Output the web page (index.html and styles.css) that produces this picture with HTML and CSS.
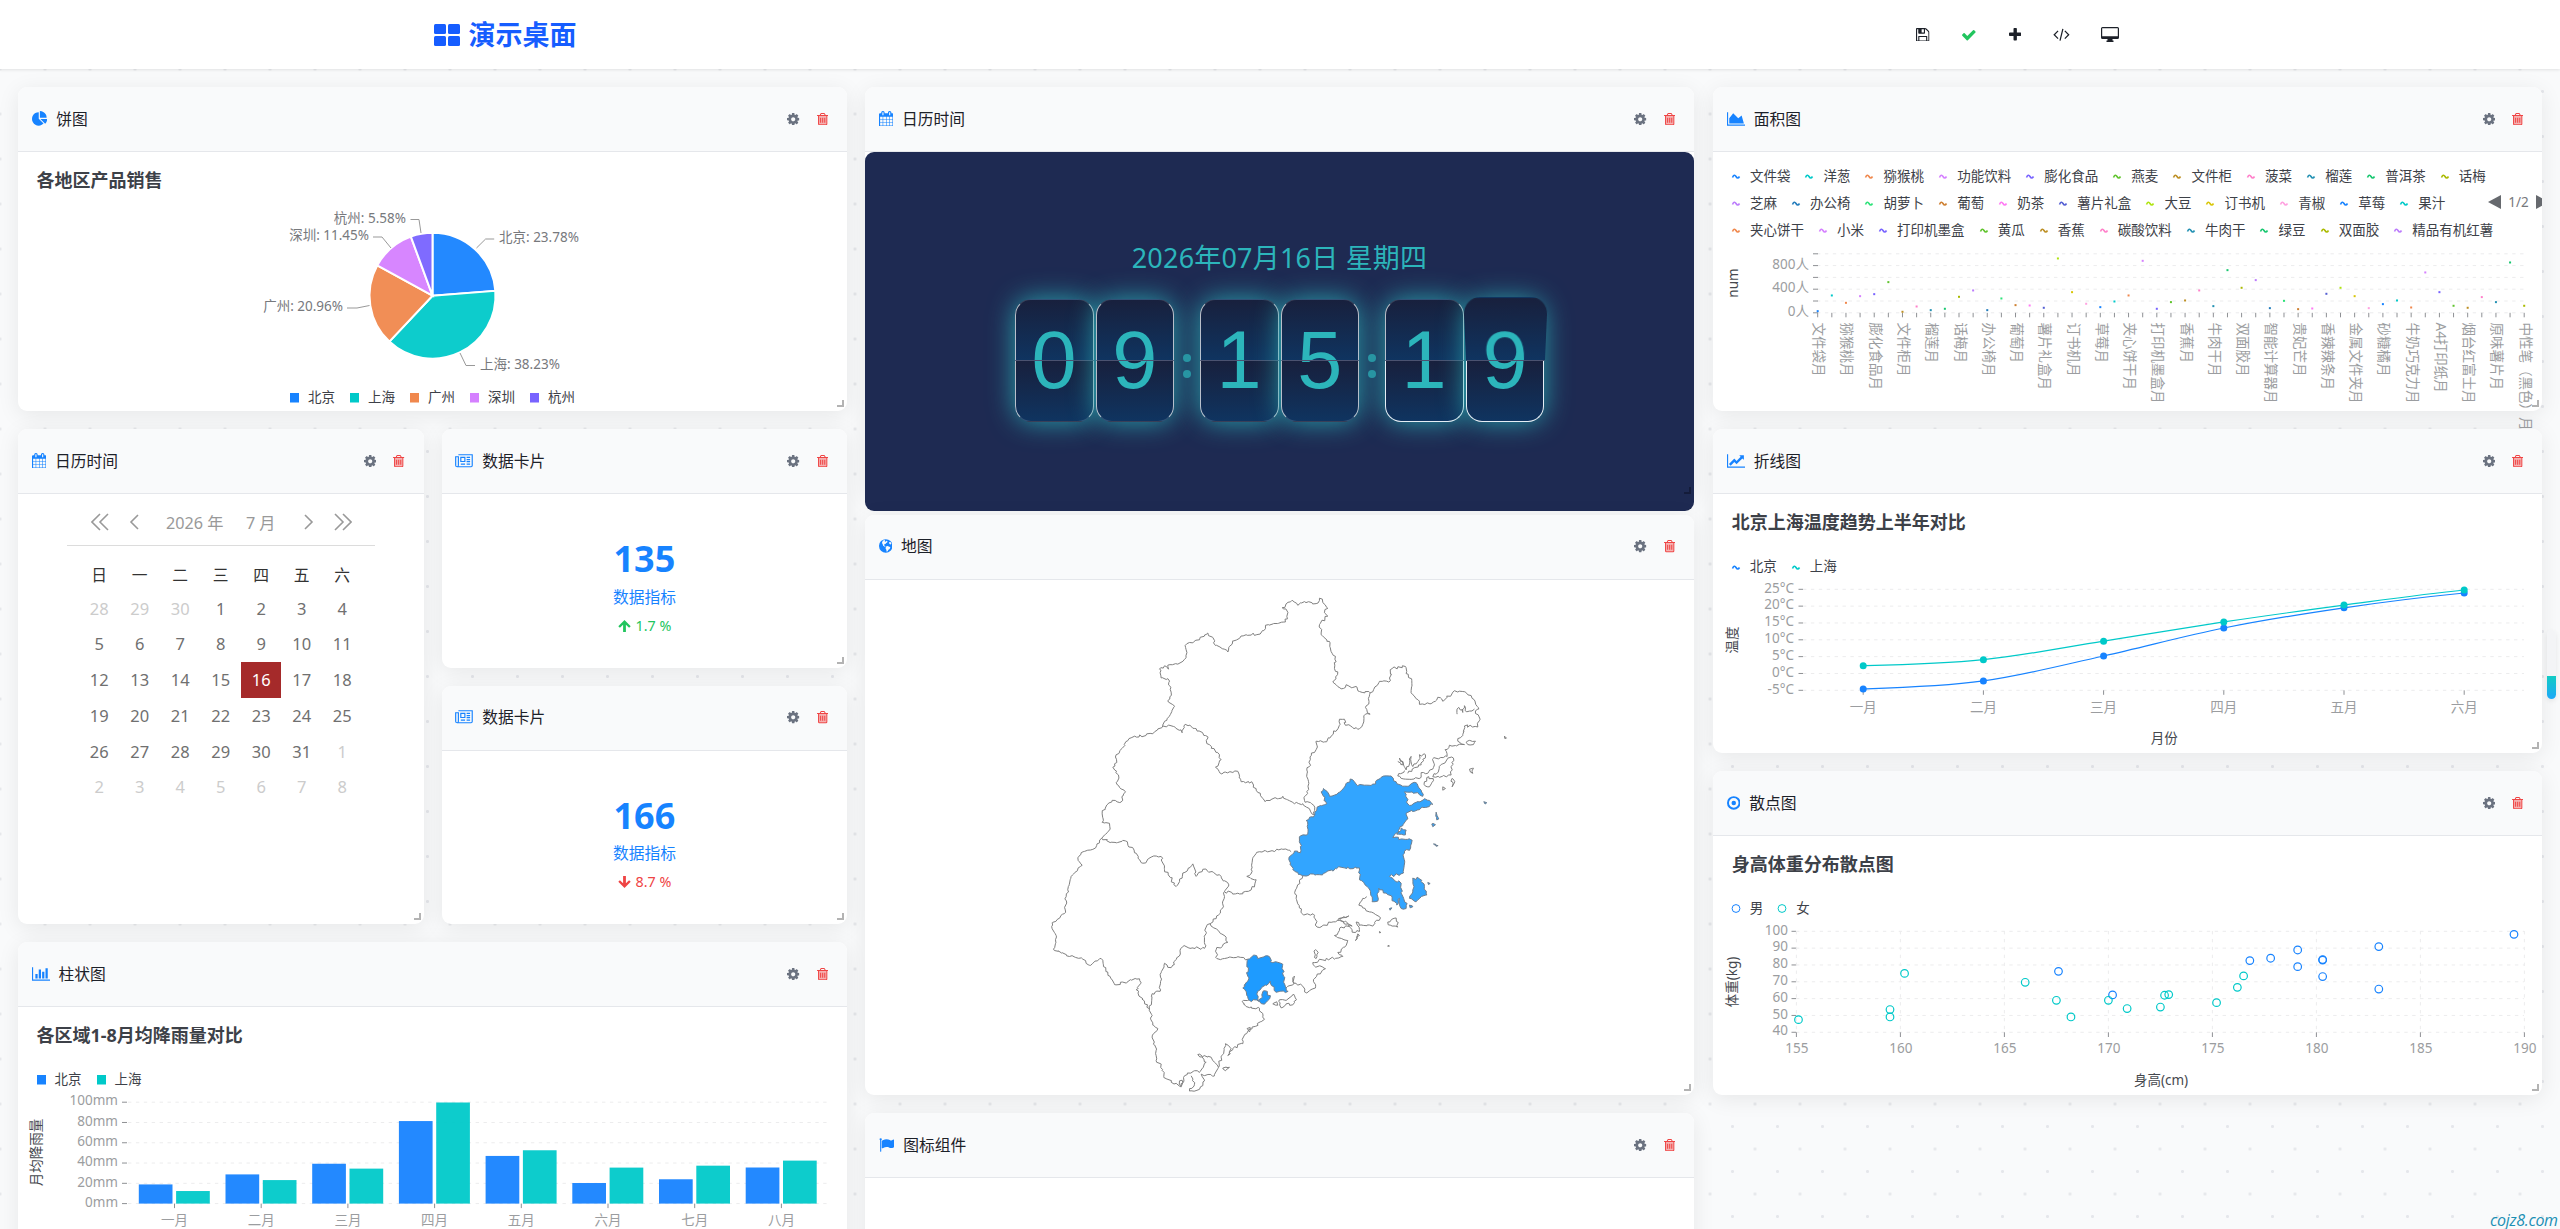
FILE: index.html
```
<!DOCTYPE html>
<html lang="zh-CN">
<head>
    <meta charset="UTF-8">
    <meta name="viewport" content="width=device-width, initial-scale=1.0">
    <title>演示桌面</title>
    <link rel="stylesheet" href="styles.css">
</head>
<body>
    <!-- Icon sprite -->
    <svg class="sprite" width="0" height="0">
        <symbol id="i-cog" viewBox="128 128 1536 1536"><path d="M1152 896q0-106-75-181t-181-75-181 75-75 181 75 181 181 75 181-75 75-181zm512-109v222q0 12-8 23t-20 13l-185 28q-19 54-39 91 35 50 107 138 10 12 10 25t-9 23q-27 37-99 108t-94 71q-12 0-26-9l-138-108q-44 23-91 38-16 136-29 186-7 28-36 28h-222q-14 0-24.500-8.500t-11.500-21.500l-28-184q-49-16-90-37l-141 107q-10 9-25 9-14 0-25-11-126-114-165-168-7-10-7-23 0-12 8-23 15-21 51-66.500t54-70.500q-27-50-41-99l-183-27q-13-2-21-12.500t-8-23.500v-222q0-12 8-23t19-13l186-28q14-46 39-92-40-57-107-138-10-12-10-24 0-10 9-23 26-36 98.500-107.500t94.500-71.500q13 0 26 10l138 107q44-23 91-38 16-136 29-186 7-28 36-28h222q14 0 24.500 8.500t11.500 21.500l28 184q49 16 90 37l142-107q9-9 24-9 13 0 25 10 129 119 165 170 7 8 7 22 0 12-8 23-15 21-51 66.500t-54 70.500q26 50 41 98l183 28q13 2 21 12.500t8 23.500z"/></symbol>
        <symbol id="i-trash" viewBox="192 128 1408 1536"><path fill-opacity=".4" d="M400 500h992v1060h-992z"/><path d="M704 736v576q0 14-9 23t-23 9h-64q-14 0-23-9t-9-23v-576q0-14 9-23t23-9h64q14 0 23 9t9 23zm256 0v576q0 14-9 23t-23 9h-64q-14 0-23-9t-9-23v-576q0-14 9-23t23-9h64q14 0 23 9t9 23zm256 0v576q0 14-9 23t-23 9h-64q-14 0-23-9t-9-23v-576q0-14 9-23t23-9h64q14 0 23 9t9 23zm128 724v-948h-896v948q0 22 7 40.500t14.500 27 10.500 8.500h832q3 0 10.500-8.500t14.500-27 7-40.500zm-672-1076h448l-48-117q-7-9-17-11h-317q-10 2-17 11zm928 32v64q0 14-9 23t-23 9h-96v948q0 83-47 143.500t-113 60.500h-832q-66 0-113-58.500t-47-141.500v-952h-96q-14 0-23-9t-9-23v-64q0-14 9-23t23-9h309l70-167q15-37 54-63t79-26h320q40 0 79 26t54 63l70 167h309q14 0 23 9t9 23z"/></symbol>
        <symbol id="i-pie" viewBox="0 0 1792 1792"><path d="M768 890l546 546q-106 108-247.500 168t-298.500 60q-209 0-385.500-103t-279.500-279.500-103-385.500 103-385.500 279.500-279.500 385.500-103v762zm187 6h773q0 157-60 298.500t-168 247.500zm709-128h-768v-768q209 0 385.500 103t279.500 279.500 103 385.500z"/></symbol>
        <symbol id="i-area" viewBox="0 0 2048 1792"><path d="M2048 1536v128h-2048v-1536h128v1408h1920zm-384-1024l256 896h-1664v-576l448-576 576 576z"/></symbol>
        <symbol id="i-bar" viewBox="0 0 2048 1792"><path d="M640 896v512h-256v-512h256zm384-512v1024h-256v-1024h256zm1024 1152v128h-2048v-1536h128v1408h1920zm-640-896v768h-256v-768h256zm384-384v1152h-256v-1152h256z"/></symbol>
        <symbol id="i-line" viewBox="0 0 2048 1792"><path d="M2048 1536v128h-2048v-1536h128v1408h1920zm-128-1248v435q0 21-19.500 29.500t-35.500-7.500l-121-121-633 633q-10 10-23 10t-23-10l-233-233-416 416-192-192 585-585q10-10 23-10t23 10l233 233 464-464-121-121q-16-16-7.500-35.500t29.500-19.500h435q14 0 23 9t9 23z"/></symbol>
        <symbol id="i-calendar" viewBox="64 0 1664 1792"><path d="M192 1664h288v-288h-288v288zm352 0h320v-288h-320v288zm-352-352h288v-320h-288v320zm352 0h320v-320h-320v320zm-352-384h288v-288h-288v288zm736 736h320v-288h-320v288zm-384-736h320v-288h-320v288zm768 736h288v-288h-288v288zm-384-352h320v-320h-320v320zm-352-864v-288q0-13-9.500-22.500t-22.500-9.500h-64q-13 0-22.500 9.500t-9.500 22.500v288q0 13 9.500 22.500t22.500 9.500h64q13 0 22.500-9.500t9.500-22.500zm736 864h288v-320h-288v320zm-384-384h320v-288h-320v288zm384 0h288v-288h-288v288zm32-480v-288q0-13-9.500-22.500t-22.500-9.500h-64q-13 0-22.500 9.500t-9.500 22.500v288q0 13 9.500 22.500t22.500 9.500h64q13 0 22.500-9.500t9.500-22.500zm384-64v1280q0 52-38 90t-90 38h-1408q-52 0-90-38t-38-90v-1280q0-52 38-90t90-38h128v-96q0-66 47-113t113-47h64q66 0 113 47t47 113v96h384v-96q0-66 47-113t113-47h64q66 0 113 47t47 113v96h128q52 0 90 38t38 90z"/></symbol>
        <symbol id="i-news" viewBox="0 0 18.600 15.750"><path d="M3.500 1.500h14.300v11.200q0 1.200-1.200 1.200H2.200q-1.500 0-1.500-1.500V3.600h2.800v8.800q0 1.500-1.300 1.500M6 4.300h4.200v4.200H6zM6 11.200h4.400M12 4.300h3.600M12 6.500h3.600M12 8.700h3.600M12 11.200h3.600" fill="none" stroke="currentColor" stroke-width="1.200"/></symbol>
        <symbol id="i-globe" viewBox="128 128 1536 1536"><circle cx="896" cy="896" r="768"/><path fill="#f9fafb" d="M560 300l180-70 90 60-60 90 110 40 120-110 90 60-30 140-130 60-60 120-130 30-40 110 130 70 20 110-100-30-150-110-60-180-80-130zM930 960l170-50 210 90 110 60-80 190-140 90-90 160-110 60-40-210-90-170zM1260 500l170-60 110 210-70 90-150-70z"/></symbol>
        <symbol id="i-dot" viewBox="128 128 1536 1536"><circle cx="896" cy="896" r="656" fill="none" stroke="currentColor" stroke-width="224"/><circle cx="896" cy="896" r="256"/></symbol>
        <symbol id="i-flag" viewBox="0 0 1792 1792"><path d="M320 256q0 72-64 110v1266q0 13-9.500 22.500t-22.500 9.500h-64q-13 0-22.500-9.500t-9.500-22.500v-1266q-64-38-64-110 0-53 37.500-90.500t90.500-37.500 90.500 37.500 37.500 90.500zM1792 320v763q0 25-12.500 38.500t-39.500 27.500q-215 116-369 116-61 0-123.500-22t-108.500-48-115.500-48-142.500-22q-192 0-464 146-17 9-33 9-26 0-45-19t-19-45v-742q0-32 31-55 21-14 79-43 236-120 421-120 107 0 200 29t219 88q38 19 88 19 54 0 117.500-21t110-47 88-47 54.500-21q26 0 45 19t19 45z"/></symbol>
        <symbol id="i-save" viewBox="128 128 1536 1536"><path d="M512 1536h768v-384h-768v384zm896 0h128v-896q0-14-10-38.500t-20-34.500l-281-281q-10-10-34-20t-39-10v416q0 40-28 68t-68 28h-576q-40 0-68-28t-28-68v-416h-128v1280h128v-416q0-40 28-68t68-28h832q40 0 68 28t28 68v416zm-384-928v-320q0-13-9.500-22.500t-22.500-9.500h-192q-13 0-22.500 9.500t-9.500 22.500v320q0 13 9.500 22.500t22.500 9.500h192q13 0 22.500-9.500t9.500-22.500zm640 32v928q0 40-28 68t-68 28h-1344q-40 0-68-28t-28-68v-1344q0-40 28-68t68-28h928q40 0 88 20t76 48l280 280q28 28 48 76t20 88z"/></symbol>
        <symbol id="i-check" viewBox="0 0 1792 1792"><path d="M1671 566q0 40-28 68l-724 724-136 136q-28 28-68 28t-68-28l-136-136-362-362q-28-28-28-68t28-68l136-136q28-28 68-28t68 28l294 295 656-657q28-28 68-28t68 28l136 136q28 28 28 68z"/></symbol>
        <symbol id="i-plus" viewBox="192 192 1408 1408"><path d="M1600 736v192q0 40-28 68t-68 28h-416v416q0 40-28 68t-68 28h-192q-40 0-68-28t-28-68v-416h-416q-40 0-68-28t-28-68v-192q0-40 28-68t68-28h416v-416q0-40 28-68t68-28h192q40 0 68 28t28 68v416h416q40 0 68 28t28 68z"/></symbol>
        <symbol id="i-code" viewBox="0 0 17 14"><path d="M5 3L1 7l4 4M12 3l4 4-4 4M10 1L7 13" fill="none" stroke="currentColor" stroke-width="1.300"/></symbol>
        <symbol id="i-desktop" viewBox="0 0 18 16"><path fill-rule="evenodd" d="M1.500 0h15q1.500 0 1.500 1.500v9q0 1.500-1.500 1.500h-5v1.500h1v1.500h-7v-1.500h1v-1.500h-5q-1.500 0-1.500-1.500v-9q0-1.500 1.500-1.500zM1.200 1.200v8h15.600v-8z"/></symbol>
        <symbol id="i-grid" viewBox="0 0 26 22"><rect width="12" height="10" rx="1.500"/><rect x="14" width="12" height="10" rx="1.500"/><rect y="12" width="12" height="10" rx="1.500"/><rect x="14" y="12" width="12" height="10" rx="1.500"/></symbol>
        <symbol id="i-arrow" viewBox="0 0 13 12"><path d="M6.500 0l6.200 6.200-1.600 1.600-3.200-3.100V12H5.100V4.700L1.900 7.800.3 6.200z"/></symbol>
    </svg>

    <header class="topbar">
        <div class="brand">
            <svg class="brand-icon"><use href="#i-grid"/></svg>
            <h1>演示桌面</h1>
        </div>
        <nav class="tools">
            <svg class="tool tool-save"><use href="#i-save"/></svg>
            <svg class="tool tool-check"><use href="#i-check"/></svg>
            <svg class="tool tool-plus"><use href="#i-plus"/></svg>
            <svg class="tool tool-code"><use href="#i-code"/></svg>
            <svg class="tool tool-desktop"><use href="#i-desktop"/></svg>
        </nav>
    </header>

    <main class="board">
        <div class="column">
            <section class="card h4">
                <div class="card-head">
                    <svg class="icon w-16"><use href="#i-pie"/></svg>
                    <h2>饼图</h2>
                    <svg class="cog"><use href="#i-cog"/></svg>
                    <svg class="trash"><use href="#i-trash"/></svg>
                </div>
                <div class="card-body">
                    <h3>各地区产品销售</h3>
                    <svg class="plot pie-plot" id="pie-chart"></svg>
                    <div class="legend center" id="pie-legend"></div>
                </div>
                <i class="grip"></i>
            </section>

            <div class="split">
                <section class="card h6">
                    <div class="card-head">
                        <svg class="icon w-15"><use href="#i-calendar"/></svg>
                        <h2>日历时间</h2>
                        <svg class="cog"><use href="#i-cog"/></svg>
                        <svg class="trash"><use href="#i-trash"/></svg>
                    </div>
                    <div class="card-body">
                        <div class="calendar">
                            <div class="cal-nav">
                                <svg class="cal-double" viewBox="0 0 18 18"><path d="M9 1L1 9l8 8M17 1L9 9l8 8"/></svg>
                                <svg class="cal-single" viewBox="0 0 10 18"><path d="M9 2L2 9l7 7"/></svg>
                                <span class="cal-year">2026 年</span>
                                <span class="cal-month">7 月</span>
                                <svg class="cal-single next-month" viewBox="0 0 10 18"><path d="M1 2l7 7-7 7"/></svg>
                                <svg class="cal-double next-year" viewBox="0 0 18 18"><path d="M1 1l8 8-8 8M9 1l8 8-8 8"/></svg>
                            </div>
                            <div class="cal-grid" id="cal-grid">
                                <b>日</b><b>一</b><b>二</b><b>三</b><b>四</b><b>五</b><b>六</b>
                            </div>
                        </div>
                    </div>
                    <i class="grip"></i>
                </section>

                <div class="stack">
                    <section class="card h3">
                        <div class="card-head">
                            <svg class="icon w-18"><use href="#i-news"/></svg>
                            <h2>数据卡片</h2>
                            <svg class="cog"><use href="#i-cog"/></svg>
                            <svg class="trash"><use href="#i-trash"/></svg>
                        </div>
                        <div class="card-body stat">
                            <strong>135</strong>
                            <span class="stat-name">数据指标</span>
                            <span class="stat-trend up"><svg><use href="#i-arrow"/></svg>1.7 %</span>
                        </div>
                        <i class="grip"></i>
                    </section>
                    <section class="card h3">
                        <div class="card-head">
                            <svg class="icon w-18"><use href="#i-news"/></svg>
                            <h2>数据卡片</h2>
                            <svg class="cog"><use href="#i-cog"/></svg>
                            <svg class="trash"><use href="#i-trash"/></svg>
                        </div>
                        <div class="card-body stat">
                            <strong>166</strong>
                            <span class="stat-name">数据指标</span>
                            <span class="stat-trend down"><svg><use href="#i-arrow"/></svg>8.7 %</span>
                        </div>
                        <i class="grip"></i>
                    </section>
                </div>
            </div>

            <section class="card h4">
                <div class="card-head">
                    <svg class="icon w-18"><use href="#i-bar"/></svg>
                    <h2>柱状图</h2>
                    <svg class="cog"><use href="#i-cog"/></svg>
                    <svg class="trash"><use href="#i-trash"/></svg>
                </div>
                <div class="card-body">
                    <h3>各区域1-8月均降雨量对比</h3>
                    <div class="legend" id="bar-legend"></div>
                    <svg class="plot" id="bar-chart"></svg>
                </div>
            </section>
        </div>

        <div class="column">
            <section class="card h5">
                <div class="card-head">
                    <svg class="icon w-15"><use href="#i-calendar"/></svg>
                    <h2>日历时间</h2>
                    <svg class="cog"><use href="#i-cog"/></svg>
                    <svg class="trash"><use href="#i-trash"/></svg>
                </div>
                <div class="clock-panel">
                    <div class="clock-date">2026年07月16日 星期四</div>
                    <div class="clock">
                        <div class="digit"><span class="half top"><em>0</em></span><span class="half bottom"><em>0</em></span></div>
                        <div class="digit"><span class="half top"><em>9</em></span><span class="half bottom"><em>9</em></span></div>
                        <div class="colon"></div>
                        <div class="digit"><span class="half top"><em>1</em></span><span class="half bottom"><em>1</em></span></div>
                        <div class="digit"><span class="half top"><em>5</em></span><span class="half bottom"><em>5</em></span></div>
                        <div class="colon"></div>
                        <div class="digit lit"><span class="half top"><em>1</em></span><span class="half bottom"><em>1</em></span></div>
                        <div class="digit lit"><span class="half top flipping"><em>9</em></span><span class="half bottom"><em>9</em></span></div>
                    </div>
                </div>
                <i class="grip dark"></i>
            </section>

            <section class="card h7">
                <div class="card-head">
                    <svg class="icon w-13"><use href="#i-globe"/></svg>
                    <h2>地图</h2>
                    <svg class="cog"><use href="#i-cog"/></svg>
                    <svg class="trash"><use href="#i-trash"/></svg>
                </div>
                <div class="card-body">
                    <svg class="plot map-plot" id="map-chart"></svg>
                </div>
                <i class="grip"></i>
            </section>

            <section class="card h4">
                <div class="card-head">
                    <svg class="icon w-16"><use href="#i-flag"/></svg>
                    <h2>图标组件</h2>
                    <svg class="cog"><use href="#i-cog"/></svg>
                    <svg class="trash"><use href="#i-trash"/></svg>
                </div>
                <div class="card-body"></div>
            </section>
        </div>

        <div class="column last">
            <section class="card h4">
                <div class="card-head">
                    <svg class="icon w-18"><use href="#i-area"/></svg>
                    <h2>面积图</h2>
                    <svg class="cog"><use href="#i-cog"/></svg>
                    <svg class="trash"><use href="#i-trash"/></svg>
                </div>
                <div class="card-body">
                    <div class="area-top">
                        <div class="area-legend" id="area-legend"></div>
                        <div class="pager"><i class="prev"></i><span>1/2</span><i class="next"></i></div>
                    </div>
                    <svg class="plot" id="area-chart"></svg>
                </div>
                <i class="grip"></i>
            </section>

            <section class="card h4">
                <div class="card-head">
                    <svg class="icon w-18"><use href="#i-line"/></svg>
                    <h2>折线图</h2>
                    <svg class="cog"><use href="#i-cog"/></svg>
                    <svg class="trash"><use href="#i-trash"/></svg>
                </div>
                <div class="card-body">
                    <h3>北京上海温度趋势上半年对比</h3>
                    <div class="legend" id="line-legend"></div>
                    <svg class="plot" id="line-chart"></svg>
                </div>
                <i class="grip"></i>
            </section>

            <section class="card h4">
                <div class="card-head">
                    <svg class="icon w-13"><use href="#i-dot"/></svg>
                    <h2>散点图</h2>
                    <svg class="cog"><use href="#i-cog"/></svg>
                    <svg class="trash"><use href="#i-trash"/></svg>
                </div>
                <div class="card-body">
                    <h3>身高体重分布散点图</h3>
                    <div class="legend" id="scatter-legend"></div>
                    <svg class="plot" id="scatter-chart"></svg>
                </div>
                <i class="grip"></i>
            </section>
        </div>
    </main>

    <div class="side-handle"></div>
    <div class="site-mark">cojz8.com</div>

    <script src="script.js"></script>
</body>
</html>
```
FILE: styles.css
```
* {
    box-sizing: border-box;
}
body {
    margin: 0;
    height: 1229px;
    overflow: hidden;
    position: relative;
    font-family: "Noto Sans", "Noto Sans CJK SC", sans-serif;
    font-size: 15.75px;
    color: #1d2129;
    background-color: #f9fafb;
}
h1, h2, h3 {
    margin: 0;
}
svg {
    fill: currentColor;
    flex: none;
}
.sprite {
    position: absolute;
}

/* Top bar */
.topbar {
    height: 69px;
    padding: 0 441px 0 433.5px;
    display: flex;
    align-items: center;
    justify-content: space-between;
    background-color: #fff;
    box-shadow: 0 1px 3px rgba(0, 0, 0, 0.1);
    position: relative;
}
.brand {
    display: flex;
    align-items: center;
    gap: 9px;
    color: #165dff;
}
.brand-icon {
    width: 26px;
    height: 22px;
}
.brand h1 {
    font-size: 27px;
    line-height: 36px;
}
.tools {
    display: flex;
    align-items: center;
    gap: 31.5px;
}
.tool {
    height: 13.5px;
}
.tool-save {
    width: 13.5px;
}
.tool-check {
    width: 15.75px;
    height: 15.75px;
    color: #22c55e;
}
.tool-plus {
    width: 12.4px;
}
.tool-code {
    width: 16.9px;
}
.tool-desktop {
    width: 18px;
    height: 16px;
}

/* Board */
.board {
    height: 1160px;
    padding: 18px;
    display: flex;
    gap: 18px;
    overflow: hidden;
    background-image:
        radial-gradient(#e5e7eb 1.2px, transparent 1.8px),
        radial-gradient(#e5e7eb 1.2px, transparent 1.8px);
    background-size: 45px 45px;
    background-position: 0 0, 22.5px 22.5px;
}
.column {
    width: 829px;
    flex: none;
    display: flex;
    flex-direction: column;
    gap: 18px;
}
.column.last {
    margin-left: 1.3px;
}
.split {
    display: flex;
    gap: 18px;
}
.split > * {
    flex: 1;
}
.stack {
    display: flex;
    flex-direction: column;
    gap: 18px;
}
.card {
    flex: none;
    display: flex;
    flex-direction: column;
    position: relative;
    background-color: #fff;
    border-radius: 9px;
    box-shadow: 0 4px 22px rgba(0, 0, 0, 0.08);
}
.split > .card,
.stack > .card {
    flex: none;
}
.split > .card {
    width: 405.83px;
}
.h3 { height: 238.5px; }
.h4 { height: 324px; }
.h5 { height: 409.5px; }
.h6 { height: 495px; }
.h7 { height: 580.5px; }
.card-head {
    flex: none;
    height: 65px;
    padding: 0 19px 0 13.5px;
    display: flex;
    align-items: center;
    background-color: #f9fafb;
    border-bottom: 1px solid #e5e7eb;
    border-radius: 9px 9px 0 0;
}
.card-head h2 {
    margin: -2px 0 0 9px;
    flex: 1;
    font-size: 15.75px;
    font-weight: 400;
}
.icon {
    height: 15.75px;
    margin-top: -1px;
    color: #1783ff;
}
.w-13 { width: 13.5px; }
.w-15 { width: 14.6px; }
.w-16 { width: 15.75px; }
.w-18 { width: 18px; }
.cog {
    width: 12.4px;
    height: 12.4px;
    color: #6b7280;
}
.trash {
    margin-left: 17px;
    width: 11.4px;
    height: 12.4px;
    color: #ef4444;
}
.card-body {
    flex: 1;
    min-height: 0;
    display: flex;
    flex-direction: column;
}
.card-body h3 {
    margin: 18px 0 0 18.5px;
    font-size: 18px;
    line-height: 20px;
    color: #3d4148;
}
.grip {
    position: absolute;
    right: 3px;
    bottom: 4px;
    width: 7px;
    height: 7px;
    border: solid #b3b3b3;
    border-width: 0 2px 2px 0;
}
.grip.dark {
    border-color: #141c3a;
    bottom: 3px;
}

/* Charts */
.plot {
    width: 100%;
    flex: 1;
    min-height: 0;
    overflow: visible;
    font-size: 13.5px;
}
.pie-plot {
    flex: none;
    height: 197px;
}
.map-plot {
    overflow: hidden;
}
.legend {
    margin: 23.5px 0 0.5px 18.5px;
    display: flex;
    gap: 15px;
    font-size: 13.5px;
    line-height: 20px;
    color: #3d4148;
}
.legend.center {
    margin: 0;
    justify-content: center;
}
.legend-item {
    display: flex;
    align-items: center;
    gap: 9px;
    white-space: nowrap;
}
.legend-item svg {
    width: 9px;
    height: 9px;
    margin-top: 1px;
    overflow: visible;
}
.grid {
    stroke: #ececed;
    stroke-dasharray: 3.4 4.5;
}
.tick {
    stroke: #8e9094;
}
.tick-label {
    fill: #9b9da0;
}
.axis-title {
    fill: #45484e;
}
.pie-label {
    fill: #77797d;
}
.leader {
    fill: none;
    stroke: #999;
}
.border {
    fill: none;
    stroke: #808080;
    stroke-width: 1;
}
.region {
    stroke: #6f7f8f;
    stroke-width: 1;
}
.area-top {
    display: flex;
    align-items: center;
    padding-top: 8px;
    overflow: hidden;
    height: 91.5px;
    flex: none;
}
.area-legend {
    width: 775px;
    flex: none;
    padding-left: 18.5px;
    font-size: 13.5px;
    color: #3d4148;
}
.legend-row {
    height: 27px;
    display: flex;
    align-items: center;
    gap: 15px;
}
.area-legend .legend-item {
    gap: 9.1px;
}
.pager {
    flex: none;
    display: flex;
    align-items: center;
    gap: 7px;
    font-size: 13.5px;
    color: #77797d;
}
.prev,
.next {
    border: solid transparent;
    border-width: 7px 13px 7px 0;
    border-right-color: #66696e;
}
.next {
    border-width: 7px 0 7px 13px;
    border-left-color: #66696e;
}

/* Calendar */
.calendar {
    width: 308px;
    margin: 0 auto;
}
.cal-nav {
    height: 52px;
    display: flex;
    align-items: center;
    padding: 5px 0 0 24px;
    font-size: 16.2px;
    color: #999;
    border-bottom: 1px solid #dcdcdc;
}
.cal-nav svg {
    fill: none;
    stroke: #999;
    stroke-width: 1.6;
    height: 18px;
}
.cal-double {
    width: 18px;
}
.cal-single {
    width: 10px;
    margin-left: 20px;
}
.cal-year {
    width: 58px;
    margin-left: 27px;
    white-space: nowrap;
}
.cal-month {
    width: 30px;
    margin-left: 22px;
    white-space: nowrap;
}
.next-month {
    margin-left: 28px;
}
.next-year {
    margin-left: 20px;
}
.cal-grid {
    margin: 11.5px 0 0 12px;
    display: grid;
    grid-template-columns: repeat(7, 40.5px);
    grid-template-rows: 33px repeat(6, 35.8px);
    place-items: stretch;
    text-align: center;
    font-size: 16.5px;
    line-height: 35px;
    color: #707070;
}
.cal-grid b {
    font-weight: 400;
    font-size: 15.75px;
    color: #333;
}
.cal-grid .muted {
    color: #ccc;
}
.cal-grid .today {
    background-color: #a52a2a;
    color: #fff;
}

/* Data cards */
.stat {
    align-items: center;
    justify-content: center;
    padding-top: 13px;
    color: #1783ff;
}
.stat strong {
    font-size: 36px;
    line-height: 40px;
    margin-top: 1px;
}
.stat-name {
    line-height: 24px;
    margin-top: 5.5px;
}
.stat-trend {
    display: flex;
    align-items: center;
    gap: 5px;
    margin-top: 6px;
    font-size: 14.3px;
    line-height: 22px;
}
.stat-trend svg {
    width: 13px;
    height: 12px;
}
.up {
    color: #22c55e;
}
.down {
    color: #ef4444;
}
.down svg {
    transform: rotate(180deg);
}

/* Flip clock */
.clock-panel {
    flex: none;
    height: 359px;
    display: flex;
    flex-direction: column;
    align-items: center;
    justify-content: center;
    overflow: hidden;
    border-radius: 9px;
    background-color: #1e2a52;
    color: #2cb5bb;
}
.clock-date {
    font-size: 27px;
    line-height: 36px;
    margin: -1px 0 23px;
    letter-spacing: 0.2px;
}
.clock {
    display: flex;
    gap: 2px;
}
.digit {
    width: 78.75px;
    height: 123px;
    position: relative;
    border-radius: 18px;
    box-shadow: 0 0 27px rgba(44, 181, 187, 0.85);
    font-family: "Liberation Sans", Arial, sans-serif;
    font-size: 81px;
}
.half {
    display: block;
    height: 61.5px;
    overflow: hidden;
    text-align: center;
    border: 1px solid rgba(255, 255, 255, 0.7);
    background-image: linear-gradient(#18203d, #0f3460);
}
.half em {
    display: block;
    font-style: normal;
    line-height: 123px;
}
.top {
    border-radius: 16px 16px 0 0;
    border-top-color: rgba(255, 255, 255, 0.15);
    border-bottom-color: #4b5270;
}
.top em {
    margin-top: -1px;
}
.bottom {
    border-radius: 0 0 16px 16px;
    border-top: 0;
    border-bottom-color: rgba(255, 255, 255, 0.15);
}
.bottom em {
    margin-top: -61.5px;
}
.lit .bottom {
    border-color: #e5eef5;
}
.flipping {
    border-color: transparent;
    border-bottom-color: #4b5270;
    transform-origin: 50% 100%;
    transform: perspective(243px) rotateX(-15deg);
}
.colon {
    width: 21.5px;
    display: flex;
    flex-direction: column;
    align-items: center;
    justify-content: center;
    gap: 8px;
    padding-top: 10px;
    position: relative;
}
.colon::before,
.colon::after {
    content: "";
    width: 8px;
    height: 8px;
    border-radius: 50%;
    background-color: #2cb5bb;
    opacity: 0.7;
}

.side-handle {
    position: absolute;
    right: 4px;
    top: 630px;
    width: 9px;
    height: 69px;
    border-radius: 5px;
    background: linear-gradient(#f3f4f6 46px, #12cbc4 46px, #1fa8f8);
    box-shadow: 0 2px 5px rgba(0, 0, 0, 0.08);
}
.site-mark {
    position: absolute;
    left: 2490px;
    bottom: -3px;
    font-family: "Open Sans", sans-serif;
    font-size: 16px;
    font-style: italic;
    letter-spacing: -0.3px;
    line-height: 24px;
    color: #1c8fb4;
}
```
FILE: script.js
```
const COLORS = ['#1783FF', '#00C9C9', '#F0884D', '#D580FF', '#7863FF', '#60C42D', '#BD8F24', '#FF80CA', '#2491B3', '#17C76F',
    '#AABA01', '#BC7CFC', '#237CBC', '#2DE379', '#CE8032', '#FF7AF4', '#545FD3', '#AFE410', '#D8C608', '#FFA1E0'];
const byId = (id) => document.getElementById(id);

// Small helpers that return svg markup
const line = (x1, y1, x2, y2, cls) => `<line x1="${x1}" y1="${y1}" x2="${x2}" y2="${y2}" class="${cls}"/>`;
const text = (x, y, str, cls, anchor = 'middle') => `<text x="${x}" y="${y + 4.2}" text-anchor="${anchor}" class="${cls}">${str}</text>`;
const vtext = (x, y, str) => `<text transform="translate(${x + 4.5} ${y}) rotate(-90)" text-anchor="middle" class="axis-title">${str}</text>`;

// Legends
const MARKERS = {
    square: (c) => `<rect width="9" height="9.500" fill="${c}"/>`,
    wave: (c) => `<path d="M.5 5.500q1.750-4 3.500-1t3.500 0" transform="translate(0 1)" fill="none" stroke="${c}" stroke-width="1.600"/>`,
    ring: (c) => `<circle cx="4" cy="4.500" r="3.900" fill="none" stroke="${c}"/>`
};
const legendItem = (name, color, marker) => `<span class="legend-item"><svg>${MARKERS[marker](color)}</svg>${name}</span>`;
const fillLegend = (id, names, marker) => {
    byId(id).innerHTML = names.map((n, i) => legendItem(n, COLORS[i], marker)).join('');
};
fillLegend('pie-legend', ['北京', '上海', '广州', '深圳', '杭州'], 'square');
fillLegend('bar-legend', ['北京', '上海'], 'square');
fillLegend('line-legend', ['北京', '上海'], 'wave');
fillLegend('scatter-legend', ['男', '女'], 'ring');

// Pie
const drawPie = () => {
    const cx = 414.5, cy = 105.7, r = 63;
    let angle = -Math.PI / 2;
    let out = '';
    [23.78, 38.23, 20.96, 11.45, 5.58].forEach((v, i) => {
        const end = angle + v / 100 * Math.PI * 2;
        out += `<path d="M${cx} ${cy}L${cx + r * Math.cos(angle)} ${cy + r * Math.sin(angle)}A${r} ${r} 0 0 1 ${cx + r * Math.cos(end)} ${cy + r * Math.sin(end)}Z" fill="${COLORS[i]}" fill-opacity=".95" stroke="#fff" stroke-width="2"/>`;
        angle = end;
    });
    ['458.500,58 467.600,49 476.200,49', '442,163 448,175.500 457,175.500', '329,118 339,118 351.500,115.500', '355,47 364,47 373,58', '392.500,29.500 401,29.500 403,43']
        .forEach((p) => { out += `<polyline points="${p}" class="leader"/>`; });
    out += text(481, 48, '北京: 23.78%', 'pie-label', 'start');
    out += text(462, 174.5, '上海: 38.23%', 'pie-label', 'start');
    out += text(325, 117, '广州: 20.96%', 'pie-label', 'end');
    out += text(351, 46, '深圳: 11.45%', 'pie-label', 'end');
    out += text(388, 28.5, '杭州: 5.58%', 'pie-label', 'end');
    byId('pie-chart').innerHTML = out;
};

// Bars
const drawBars = () => {
    const y0 = 114.6, k = 1.014;
    const beijing = [18.9, 28.8, 39.3, 81.4, 47, 20.3, 24, 35.6];
    const shanghai = [12.4, 23.2, 34.5, 99.7, 52.6, 35.5, 37.4, 42.4];
    let out = vtext(18.5, 63.5, '月均降雨量');
    for (let v = 0; v <= 100; v += 20) {
        out += line(110, y0 - v * k, 811, y0 - v * k, 'grid') + line(104, y0 - v * k, 109, y0 - v * k, 'tick');
        out += text(100, y0 - v * k - 1, v + 'mm', 'tick-label', 'end');
    }
    ['一月', '二月', '三月', '四月', '五月', '六月', '七月', '八月'].forEach((m, i) => {
        const x = 156.5 + i * 86.7;
        out += `<rect x="${x - 35.7}" y="${y0 - beijing[i] * k}" width="33.700" height="${beijing[i] * k}" fill="#1783FF" fill-opacity=".95"/>`;
        out += `<rect x="${x + 1.6}" y="${y0 - shanghai[i] * k}" width="33.700" height="${shanghai[i] * k}" fill="#00C9C9" fill-opacity=".95"/>`;
        out += line(x, y0, x, y0 + 4.5, 'tick') + text(x, 131.5, m, 'tick-label');
    });
    byId('bar-chart').innerHTML = out;
};

// Lines
const drawLines = () => {
    const py = (v) => 13.3 + (25 - v) * 3.367;
    const px = (i) => 150.2 + i * 120.2;
    let out = vtext(19, 64, '温度');
    for (let v = -5; v <= 25; v += 5) {
        out += line(90, py(v), 811, py(v), 'grid') + line(85.5, py(v), 90, py(v), 'tick');
        out += text(81, py(v) - 1, v + '°C', 'tick-label', 'end');
    }
    ['一月', '二月', '三月', '四月', '五月', '六月'].forEach((m, i) => {
        out += line(px(i), 114.3, px(i), 118.8, 'tick') + text(px(i), 131.5, m, 'tick-label');
    });
    [[-4.6, -2.2, 5.2, 13.5, 19.5, 23.9], [2.3, 4.1, 9.6, 15.3, 20.3, 24.8]].forEach((vals, s) => {
        const p = vals.map((v, i) => [px(i), py(v)]);
        const slope = (i) => {
            if (i === 0) return (p[1][1] - p[0][1]) * 0.5;
            if (i === p.length - 1) return (p[i][1] - p[i - 1][1]) * 0.8;
            return (p[i + 1][1] - p[i - 1][1]) / 2;
        };
        let d = `M${p[0]}`;
        for (let i = 1; i < p.length; i++) {
            d += `C${p[i - 1][0] + 40} ${p[i - 1][1] + slope(i - 1) / 3} ${p[i][0] - 40} ${p[i][1] - slope(i) / 3} ${p[i]}`;
        }
        out += `<path d="${d}" fill="none" stroke="${COLORS[s]}" stroke-width="1.200"/>`;
        out += p.map(([x, y]) => `<circle cx="${x}" cy="${y}" r="3.500" fill="${COLORS[s]}"/>`).join('');
    });
    out += text(451.3, 162.5, '月份', 'axis-title');
    byId('line-chart').innerHTML = out;
};

// Scatter
const drawScatter = () => {
    const px = (v) => 83.4 + (v - 155) * 20.8;
    const py = (v) => 13.3 + (100 - v) * 1.683;
    const male = [[167.6, 76.2], [170.2, 62.2], [176.8, 82.6], [177.8, 84], [179.1, 88.9], [179.1, 79], [180.3, 83.2], [180.3, 82.9],
        [180.3, 73.1], [183, 90.9], [183, 65.7], [189.5, 98.2]];
    const female = [[155.1, 47.5], [159.5, 53.5], [159.5, 49.1], [160.2, 75], [166, 69.7], [167.5, 59], [168.2, 49.1], [170, 59],
        [170.9, 54.1], [172.5, 55], [172.7, 62], [172.9, 62.4], [175.2, 57.6], [176.2, 66.7], [176.5, 73.5]];
    let out = vtext(19, 64, '体重(kg)');
    for (let v = 40; v <= 100; v += 10) {
        out += line(83, py(v), 811, py(v), 'grid') + line(78.5, py(v), 83, py(v), 'tick') + text(75, py(v) - 1, v, 'tick-label', 'end');
    }
    for (let v = 155; v <= 190; v += 5) {
        out += line(px(v), 13, px(v), 114, 'grid') + line(px(v), 114.3, px(v), 119, 'tick') + text(px(v) + 0.5, 131, v, 'tick-label');
    }
    [male, female].forEach((set, s) => {
        out += set.map(([x, y]) => `<circle cx="${px(x)}" cy="${py(y)}" r="3.800" fill="none" stroke="${COLORS[s]}" stroke-width="1.200"/>`).join('');
    });
    out += text(448, 162.5, '身高(cm)', 'axis-title');
    byId('scatter-chart').innerHTML = out;
};

// Area chart, every product has a single value so only dots are left
const drawArea = () => {
    const rows = [
        ['文件袋', '洋葱', '猕猴桃', '功能饮料', '膨化食品', '燕麦', '文件柜', '菠菜', '榴莲', '普洱茶', '话梅'],
        ['芝麻', '办公椅', '胡萝卜', '葡萄', '奶茶', '薯片礼盒', '大豆', '订书机', '青椒', '草莓', '果汁'],
        ['夹心饼干', '小米', '打印机墨盒', '黄瓜', '香蕉', '碳酸饮料', '牛肉干', '绿豆', '双面胶', '精品有机红薯']
    ];
    let n = 0;
    byId('area-legend').innerHTML = rows.map((row) =>
        '<div class="legend-row">' + row.map((name) => legendItem(name, COLORS[n++ % 20], 'wave')).join('') + '</div>').join('');

    const values = [28, 294, 169, 282, 316, 520, 17, 107, 45, 68, 271, 379, 45, 243, 130, 124, 85, 921, 350, 153, 96, 192, 294, 881, 68,
        181, 209, 379, 113, 723, 424, 554, 79, 203, 62, 73, 322, 424, 282, 79, 147, 209, 90, 684, 350, 119, 85, 266, 181, 853, 119];
    const labels = ['文件袋', '猕猴桃', '膨化食品', '文件柜', '榴莲', '话梅', '办公椅', '葡萄', '薯片礼盒', '订书机', '草莓', '夹心饼干', '打印机墨盒',
        '香蕉', '牛肉干', '双面胶', '智能计算器', '贵妃芒', '香辣辣条', '金属文件夹', '砂糖橘', '牛奶巧克力', 'A4打印纸', '烟台红富士', '原味薯片', '中性笔（黑色）'];
    const y0 = 68.8, k = 0.059;
    const px = (i) => 104.7 + i * 14.13;
    let out = vtext(20, 39, 'num');
    for (let v = 0; v <= 1000; v += 200) {
        out += line(104, y0 - v * k, 811, y0 - v * k, 'grid') + line(100, y0 - v * k, 105, y0 - v * k, 'tick');
    }
    [0, 400, 800].forEach((v) => { out += text(96, y0 - v * k - 1, v + '人', 'tick-label', 'end'); });
    values.forEach((v, i) => {
        out += line(px(i), y0, px(i), y0 + 4.5, 'tick');
        out += `<rect x="${px(i) - 1}" y="${y0 - v * k - 1}" width="2" height="2" fill="${COLORS[i % 20]}"/>`;
    });
    labels.forEach((name, i) => {
        out += `<text transform="translate(${px(i * 2) - 3.5} 78.500) rotate(90)" class="tick-label">${name}月</text>`;
    });
    byId('area-chart').innerHTML = out;
};

// Calendar days, July 2026 starts on Wednesday
const drawCalendar = () => {
    let out = '';
    for (let i = 0; i < 42; i++) {
        const d = new Date(2026, 5, 28 + i);
        const cls = d.getMonth() !== 6 ? 'muted' : d.getDate() === 16 ? 'today' : '';
        out += `<span class="${cls}">${d.getDate()}</span>`;
    }
    byId('cal-grid').insertAdjacentHTML('beforeend', out);
};

// Map outlines, roughened a little so that the borders look natural
let seed = 7;
const rand = () => {
    seed = (seed * 16807) % 2147483647;
    return seed / 2147483647 - 0.5;
};
const rough = (str, closed) => {
    const pts = str.split(' ').map((p) => p.split(',').map(Number));
    if (closed) pts.push(pts[0]);
    let d = `M${pts[0]}`;
    for (let i = 1; i < pts.length; i++) {
        const [ax, ay] = pts[i - 1], [bx, by] = pts[i];
        const steps = Math.max(1, Math.round(Math.hypot(bx - ax, by - ay) / 7));
        for (let s = 1; s < steps; s++) {
            d += `L${(ax + (bx - ax) * s / steps + rand() * 8).toFixed(1)} ${(ay + (by - ay) * s / steps + rand() * 8).toFixed(1)}`;
        }
        d += `L${bx} ${by}`;
    }
    return d + (closed ? 'Z' : '');
};
const drawMap = () => {
    const borders = [
        '430,460 465,402 445,385 455,360 445,320 425,318 420,292 435,282 447,292 445,280 475,277 500,258 497,222 510,213 540,205 565,185 580,198 588,222 625,241 640,208 680,190 722,188 738,162 798,152 803,120 788,110 818,88 835,103 855,92 890,98 900,82 910,95 925,112 915,125 925,135 900,160 905,190 930,210 938,245 950,270 945,290 955,300 940,330 965,350 980,338 1000,346 1010,343 1020,358 1052,362',
        '1052,362 1080,328 1108,330 1118,290 1158,284 1160,305 1177,325 1175,355 1200,396 1235,394 1255,375 1270,387 1300,360 1330,358 1355,370 1378,410 1368,415 1382,440 1375,463 1335,460 1330,485 1315,505 1335,515 1290,517 1277,530 1283,550 1240,557 1245,575 1225,600 1205,598 1205,612 1175,618 1145,615 1135,608 1155,592',
        '1052,362 1048,395 1038,405 1052,425 1038,425 1030,455 1015,470 978,458 975,440 960,440 962,455 935,490 915,507 890,505 890,530 876,540 870,580 862,590 868,630 855,680 883,695 886,722',
        '430,460 465,462 488,480 497,455 530,468 565,492 562,512 600,545 605,560 588,582 607,602 655,594 665,625 697,625 710,650 737,684 790,668 825,690 850,690 886,722',
        '430,460 400,483 335,495 290,545 292,568 280,582 297,605 290,628 318,655 305,685 278,680 248,720 248,745 270,748 272,765 247,792',
        '247,792 272,805 318,800 345,835 370,866 395,848 425,846 435,885 470,935 488,910 490,895 520,868 530,905 550,884 600,900 628,930 615,950',
        '615,950 660,957 695,945 710,915 682,905 698,890 700,850 720,832 790,825 815,832',
        '247,792 220,825 185,835 175,850 188,872 155,905 140,965 135,1015 98,1042 98,1060 110,1080 102,1120 150,1142 190,1150 210,1168 245,1148 252,1172 285,1225 360,1208 365,1220 350,1240 390,1297',
        '390,1297 398,1252 422,1245 425,1190 435,1162 455,1175 490,1113 555,1118 560,1055 572,1045 590,1030 612,995 615,950',
        '572,1045 620,1085 625,1100 590,1122 592,1148 650,1145 685,1150',
        '390,1297 400,1345 415,1355 398,1380 410,1420 410,1450 425,1460 433,1500 485,1528 495,1495 525,1480 540,1485 560,1455 535,1432 575,1440 597,1470 585,1495 545,1490 555,1510 540,1535 510,1540 525,1520 515,1495',
        '597,1470 605,1440 618,1400 635,1415 625,1435 640,1415 670,1400 672,1380 688,1358 735,1328 720,1295 680,1290 668,1275 690,1270',
        '850,903 828,945 830,970 848,1015 885,1020 893,1055 955,1035 988,1022 960,1030 998,1052 965,1055 945,1080 985,1095 980,1110 955,1130 970,1142 910,1152 880,1160 885,1170 918,1178 882,1210 888,1235 862,1250 850,1230 825,1220 800,1235',
        '955,1035 985,1045 998,1070 1020,1068 1010,1040 1020,1050 1060,1052 1083,1028 1050,1010 1018,990 1030,970 1042,965',
        '1240,610 1285,555 1302,555 1295,605 1260,612 1240,610',
        '1313,425 1318,405 1330,420 1335,400 1342,418 1365,410',
        '1135,565 1152,575 1140,555 1160,590 1175,550 1180,580 1195,565 1200,545 1218,545 1205,575 1165,600'
    ];
    const islands = [
        '1215,625 1228,610 1242,622 1230,640 1218,638', '1270,640 1278,645 1270,650', '1298,615 1306,625 1298,640', '1340,508 1368,505 1362,515 1345,515',
        '780,1270 800,1272 822,1253 831,1270 820,1285 800,1282 785,1294', '760,1282 772,1276 775,1286', '1105,1040 1130,1028 1135,1055 1118,1052',
        '885,1145 888,1122 896,1130 890,1148', '1008,1095 1015,1075 1020,1080', '1350,588 1362,585 1360,600', '480,1510 488,1508 486,1525', '683,1355 692,1352 690,1365',
        '1455,490 1461,496 1456,497', '1106,1109 1110,1111 1105,1112', '610,1472 630,1470 618,1480', '820,1205 825,1200 824,1222', '1080,1068 1084,1071 1080,1072'
    ];
    const fuzhou = [
        '886,722 893,700 922,690 905,655 912,645 930,668 962,655 980,630 992,617 1010,632 1040,635 1060,632 1085,612 1115,608 1130,625 1155,638 1190,628 1205,650 1210,668 1178,655 1155,655 1170,695 1215,675 1240,692 1160,718 1165,735 1150,755 1120,790 1178,798 1170,828 1155,830 1152,895 1110,905 1145,925 1148,960 1163,985 1160,1000 1145,1000 1140,970 1132,990 1118,968 1078,940 1075,978 1058,980 1048,940 1020,915 1020,880 965,878 900,900 850,903 820,885 808,855 825,830 843,835 843,785 865,780 860,740',
        '1180,910 1200,912 1215,935 1222,960 1190,980 1170,970 1180,945', '1132,780 1145,762 1160,768 1158,782', '1250,715 1258,735 1252,738',
        '1237,750 1248,752 1240,758', '1393,684 1402,687 1397,691', '1225,923 1232,926 1227,929', '1110,1000 1117,998 1112,1005', '1170,990 1180,995 1172,998', '1242,809 1256,814 1250,816'
    ];
    const xiamen = ['685,1150 705,1138 715,1148 745,1140 760,1160 790,1165 792,1200 800,1235 806,1245 770,1248 752,1215 715,1245 718,1275 690,1272 670,1235 685,1215',
        '735,1243 753,1258 735,1283 718,1270'];
    const paths = (list, closed, attrs) => list.map((p) => `<path d="${rough(p, closed)}" vector-effect="non-scaling-stroke" ${attrs}/>`).join('');
    byId('map-chart').innerHTML = '<g transform="translate(154.500 -9.500) scale(.3333 .338)">' +
        paths(borders, false, 'class="border"') + paths(islands, true, 'class="border"') +
        paths(fuzhou, true, 'class="region" fill="#32a5ff"') + paths(xiamen, true, 'class="region" fill="#1e9bff"') + '</g>';
};

drawPie();
drawBars();
drawLines();
drawScatter();
drawArea();
drawCalendar();
drawMap();
```
